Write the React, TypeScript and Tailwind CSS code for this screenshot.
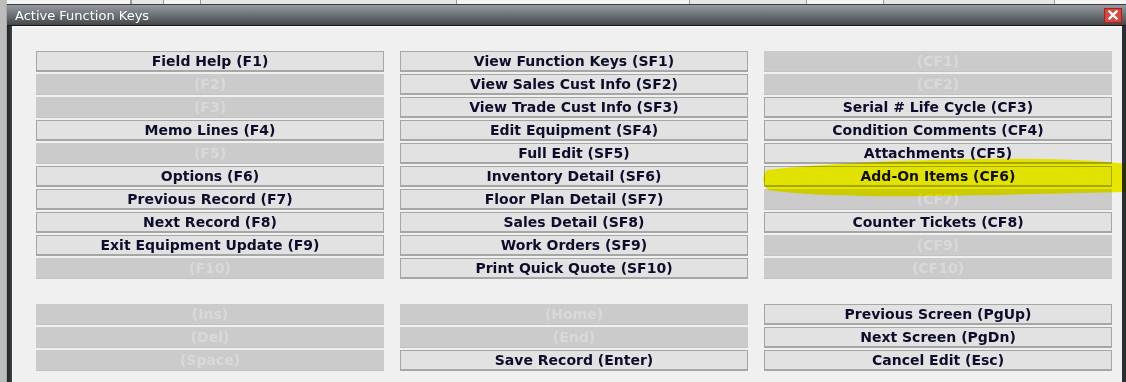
import React from 'react';

type Key = { label: string; enabled: boolean } | null;

const col1: Key[] = [
  { label: 'Field Help (F1)', enabled: true },
  { label: '(F2)', enabled: false },
  { label: '(F3)', enabled: false },
  { label: 'Memo Lines (F4)', enabled: true },
  { label: '(F5)', enabled: false },
  { label: 'Options (F6)', enabled: true },
  { label: 'Previous Record (F7)', enabled: true },
  { label: 'Next Record (F8)', enabled: true },
  { label: 'Exit Equipment Update (F9)', enabled: true },
  { label: '(F10)', enabled: false },
  null,
  { label: '(Ins)', enabled: false },
  { label: '(Del)', enabled: false },
  { label: '(Space)', enabled: false },
];

const col2: Key[] = [
  { label: 'View Function Keys (SF1)', enabled: true },
  { label: 'View Sales Cust Info (SF2)', enabled: true },
  { label: 'View Trade Cust Info (SF3)', enabled: true },
  { label: 'Edit Equipment (SF4)', enabled: true },
  { label: 'Full Edit (SF5)', enabled: true },
  { label: 'Inventory Detail (SF6)', enabled: true },
  { label: 'Floor Plan Detail (SF7)', enabled: true },
  { label: 'Sales Detail (SF8)', enabled: true },
  { label: 'Work Orders (SF9)', enabled: true },
  { label: 'Print Quick Quote (SF10)', enabled: true },
  null,
  { label: '(Home)', enabled: false },
  { label: '(End)', enabled: false },
  { label: 'Save Record (Enter)', enabled: true },
];

const col3: Key[] = [
  { label: '(CF1)', enabled: false },
  { label: '(CF2)', enabled: false },
  { label: 'Serial # Life Cycle (CF3)', enabled: true },
  { label: 'Condition Comments (CF4)', enabled: true },
  { label: 'Attachments (CF5)', enabled: true },
  { label: 'Add-On Items (CF6)', enabled: true },
  { label: '(CF7)', enabled: false },
  { label: 'Counter Tickets (CF8)', enabled: true },
  { label: '(CF9)', enabled: false },
  { label: '(CF10)', enabled: false },
  null,
  { label: 'Previous Screen (PgUp)', enabled: true },
  { label: 'Next Screen (PgDn)', enabled: true },
  { label: 'Cancel Edit (Esc)', enabled: true },
];

function FnButton({ item }: { item: Key }) {
  if (!item) return <div className="h-[21px]" />;
  if (!item.enabled) {
    return (
      <div className="h-[21px] bg-[#cbcbcb] border-b border-[#c2c2c2] flex items-center justify-center text-[#d9d9d9] leading-none">
        {item.label}
      </div>
    );
  }
  return (
    <div className="h-[21px] bg-[#e2e2e2] border border-[#a6a6a6] border-b-2 flex items-center justify-center text-[#0d0d2b] leading-none">
      {item.label}
    </div>
  );
}

function Column({ items }: { items: Key[] }) {
  return (
    <div className="flex flex-col gap-[2px]">
      {items.map((item, i) => (
        // eslint-disable-next-line react/no-array-index-key
        <FnButton key={i} item={item} />
      ))}
    </div>
  );
}

export default function App() {
  return (
    <div
      className="w-[1126px] h-[382px] relative overflow-hidden bg-[#bdbdbd] flex flex-col"
      style={{ fontFamily: '"DejaVu Sans", Verdana, sans-serif' }}
    >
      {/* strip of the form behind the dialog */}
      <div className="h-[4px] flex bg-[#f4f4f4]">
        <div className="w-[7px] bg-[#bdbdbd]" />
        <div className="w-[124px] border-r border-[#9a9a9a]" />
        <div className="w-[33px] border-x border-[#9a9a9a] bg-[#e6e6e6]" />
        <div className="w-[36px]" />
        <div className="w-[257px] border-x border-[#9a9a9a] bg-[#e6e6e6]" />
        <div className="w-[232px]" />
        <div className="w-[118px] border-x border-[#9a9a9a] bg-[#e6e6e6]" />
        <div className="w-[76px]" />
        <div className="w-[172px] border-x border-[#9a9a9a] bg-[#e6e6e6]" />
        <div className="flex-1" />
      </div>

      <div className="flex-1 flex">
        <div className="w-[7px] bg-[#bcbcbc] border-r border-[#a8a8a8]" />
        <div className="flex-1 flex flex-col">
          {/* title bar */}
          <div className="h-[22px] bg-gradient-to-b from-[#979ba0] via-[#6c7176] to-[#43484d] border-t border-[#3a3e42] border-b border-b-[#141618] flex items-center justify-between pl-[8px] pr-[4px]">
            <span className="text-white text-[13px] leading-none">Active Function Keys</span>
            <div className="w-[18px] h-[15px] bg-[#d8463e] border border-[#a8221c] flex items-center justify-center">
              <svg width="10" height="10" viewBox="0 0 10 10">
                <path d="M1.5 1.5 L8.5 8.5 M8.5 1.5 L1.5 8.5" stroke="#fff" strokeWidth="2.4" strokeLinecap="square" />
              </svg>
            </div>
          </div>

          <div className="flex-1 flex">
            <div className="w-[5px] bg-gradient-to-r from-[#1f2326] to-[#3b4045]" />
            <div className="flex-1 bg-[#f0f0f0] border-l border-t border-[#fafafa] pl-[23px] pr-[10px] pt-[24px]">
              <div className="grid grid-cols-3 gap-x-[16px] text-[14px] font-bold">
                <Column items={col1} />
                <Column items={col2} />
                <Column items={col3} />
              </div>
            </div>
            <div className="w-[4px] bg-[#2a2e33]" />
          </div>
        </div>
      </div>

      {/* highlighter mark over Add-On Items */}
      <svg
        className="absolute left-0 top-0 pointer-events-none mix-blend-darken"
        width="1126"
        height="382"
        viewBox="0 0 1126 382"
      >
        <path
          d="M767 170 C 800 166, 860 162, 930 160 C 1000 158, 1080 158, 1126 164 L 1126 192 C 1080 193, 1000 195, 930 196 C 860 197, 800 195, 768 190 C 762 184, 762 175, 767 170 Z"
          fill="#e6e600"
        />
      </svg>
    </div>
  );
}
